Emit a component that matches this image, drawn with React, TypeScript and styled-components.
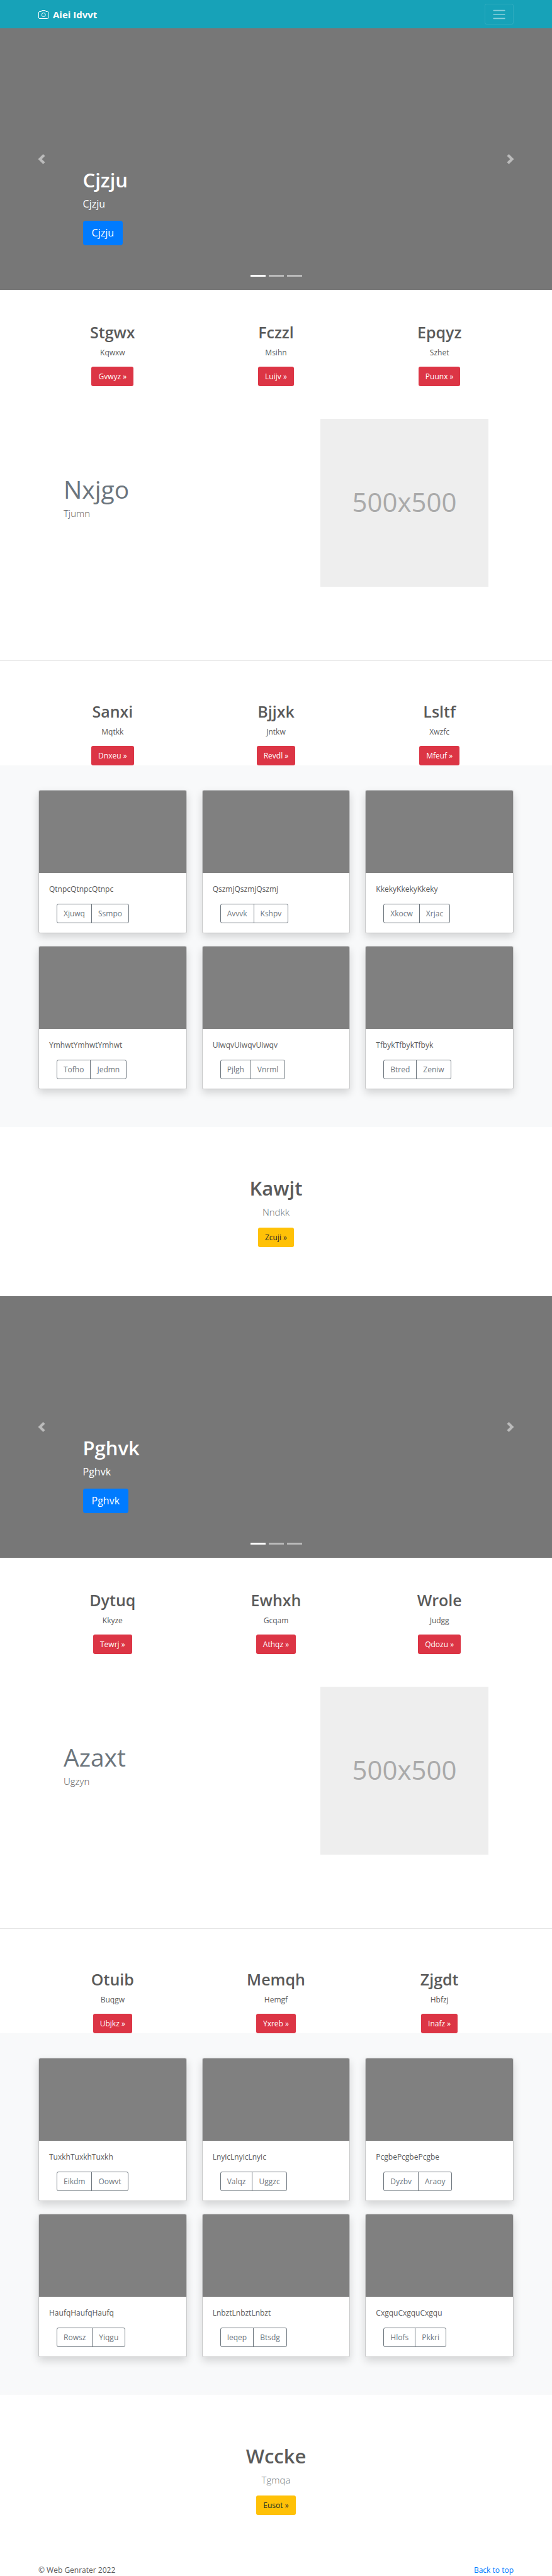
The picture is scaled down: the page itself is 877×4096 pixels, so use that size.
import React from "react";
import styled, { createGlobalStyle } from "styled-components";

const GlobalStyle = createGlobalStyle`
  *, *::before, *::after { box-sizing: border-box; }
  body {
    margin: 0;
    background: #fff;
    color: #5a5a5a;
    font-family: "Open Sans", "Noto Sans", sans-serif;
    font-size: 12px;
    line-height: 19px;
  }
  h1, h2, p { margin: 0; }
  a { text-decoration: none; }
  button { font: inherit; cursor: pointer; }
`;

const NavBar = styled.header`
  display: flex;
  align-items: center;
  justify-content: space-between;
  height: 45px;
  padding: 0 61px;
  background: #17a2b8;
`;

const Brand = styled.a`
  display: flex;
  align-items: center;
  gap: 6px;
  color: #fff;
  font-size: 15px;
  font-weight: 700;
  line-height: 24px;
`;

const Toggler = styled.button`
  display: flex;
  align-items: center;
  justify-content: center;
  width: 46px;
  height: 33px;
  padding: 0;
  background: transparent;
  border: 1px solid rgba(255, 255, 255, 0.1);
  border-radius: 3px;
`;

const Carousel = styled.section`
  position: relative;
  display: flex;
  flex-direction: column;
  align-items: flex-start;
  justify-content: flex-end;
  min-height: 416px;
  padding: 0 15% 71px;
  background: #777;
  color: #fff;
`;

const SlideTitle = styled.h1`
  margin-bottom: 6px;
  font-size: 31px;
  font-weight: 600;
  line-height: 39px;
`;

const SlideText = styled.p`
  margin-bottom: 15px;
  font-size: 16px;
  line-height: 24px;
`;

const SlideLink = styled.a`
  padding: 7px 14px 8px;
  border-radius: 4px;
  background: #007bff;
  color: #fff;
  font-size: 16px;
  line-height: 24px;
`;

const SlideControl = styled.button<{ $side: "left" | "right" }>`
  position: absolute;
  top: 0;
  bottom: 0;
  ${(p) => p.$side}: 0;
  display: flex;
  align-items: center;
  justify-content: center;
  width: 15%;
  padding: 0;
  border: 0;
  background: none;
  opacity: 0.5;
`;

const Indicators = styled.div`
  position: absolute;
  right: 15%;
  bottom: 21px;
  left: 15%;
  display: flex;
  justify-content: center;
  gap: 5px;
`;

const Indicator = styled.button<{ $active?: boolean }>`
  width: 24px;
  height: 3px;
  padding: 0;
  border: 0;
  background: #fff;
  opacity: ${(p) => (p.$active ? 1 : 0.5)};
`;

const Columns = styled.section<{ $top: number }>`
  display: grid;
  grid-template-columns: repeat(3, 1fr);
  gap: 24px;
  padding: ${(p) => p.$top}px 61px 0;
`;

const Column = styled.div`
  display: flex;
  flex-direction: column;
  align-items: center;
`;

const ColumnTitle = styled.h2`
  margin-bottom: 7px;
  font-size: 25px;
  font-weight: 600;
  line-height: 31px;
`;

const ColumnText = styled.p`
  margin-bottom: 13px;
`;

const ActionLink = styled.a<{ $tone: "danger" | "warning" }>`
  padding: 6px 11px;
  border-radius: 3px;
  background: ${(p) => (p.$tone === "danger" ? "#dc3545" : "#ffc107")};
  color: ${(p) => (p.$tone === "danger" ? "#fff" : "#212529")};
`;

const Featurette = styled.section`
  display: flex;
  justify-content: space-between;
  padding: 52px 101px 117px;
  border-bottom: 1px solid #e6e6e6;
`;

const FeaturetteBody = styled.div`
  padding-top: 91px;
`;

const FeaturetteTitle = styled.h2`
  margin-bottom: 6px;
  color: #6c757d;
  font-size: 39px;
  font-weight: 400;
  line-height: 41px;
`;

const Lead = styled.p`
  font-size: 15px;
  font-weight: 300;
  line-height: 24px;
`;

const Placeholder = styled.div`
  display: flex;
  align-items: center;
  justify-content: center;
  width: 267px;
  aspect-ratio: 1;
  padding-bottom: 4px;
  background: #eee;
  color: #aaa;
  font-size: 42px;
`;

const Album = styled.section`
  display: grid;
  grid-template-columns: repeat(3, 1fr);
  gap: 20px 24px;
  padding: 39px 61px 60px;
  background: #f8f9fa;
`;

const Card = styled.article`
  overflow: hidden;
  border: 1px solid rgba(0, 0, 0, 0.125);
  border-radius: 3px;
  background: #fff;
  background-clip: padding-box;
  box-shadow: 0 6px 13px rgba(0, 0, 0, 0.15);
`;

const CardImage = styled.div`
  height: 131px;
  background: #808080;
`;

const CardBody = styled.div`
  padding: 16px 16px 15px;
`;

const CardText = styled.p`
  margin-bottom: 13px;
  line-height: 20px;
`;

const ButtonGroup = styled.div`
  display: flex;
  margin-left: 12px;
`;

const GroupButton = styled.button`
  padding: 5px 10px;
  border: 1px solid #6c757d;
  background: transparent;
  color: #6c757d;
  line-height: 19px;

  &:first-child { border-radius: 3px 0 0 3px; }
  &:last-child { margin-left: -1px; border-radius: 0 3px 3px 0; }
`;

const CallOut = styled.section`
  display: flex;
  flex-direction: column;
  align-items: center;
  padding: 78px 61px;
`;

const CallOutTitle = styled.h1`
  margin-bottom: 6px;
  font-size: 31px;
  font-weight: 600;
  line-height: 39px;
`;

const CallOutLead = styled(Lead)`
  margin-bottom: 13px;
  color: #6c757d;
`;

const Footer = styled.footer`
  display: flex;
  justify-content: space-between;
  padding: 0 61px;

  a { color: #007bff; }
`;

type Item = [title: string, text: string, action: string];
type CardItem = [text: string, first: string, second: string];

interface Block {
  slide: string;
  top: Item[];
  feature: [string, string];
  bottom: Item[];
  cards: CardItem[];
  callOut: Item;
}

const blocks: Block[] = [
  {
    slide: "Cjzju",
    top: [
      ["Stgwx", "Kqwxw", "Gvwyz"],
      ["Fczzl", "Msihn", "Luijv"],
      ["Epqyz", "Szhet", "Puunx"],
    ],
    feature: ["Nxjgo", "Tjumn"],
    bottom: [
      ["Sanxi", "Mqtkk", "Dnxeu"],
      ["Bjjxk", "Jntkw", "Revdl"],
      ["Lsltf", "Xwzfc", "Mfeuf"],
    ],
    cards: [
      ["QtnpcQtnpcQtnpc", "Xjuwq", "Ssmpo"],
      ["QszmjQszmjQszmj", "Avvvk", "Kshpv"],
      ["KkekyKkekyKkeky", "Xkocw", "Xrjac"],
      ["YmhwtYmhwtYmhwt", "Tofho", "Jedmn"],
      ["UiwqvUiwqvUiwqv", "Pjlgh", "Vnrml"],
      ["TfbykTfbykTfbyk", "Btred", "Zeniw"],
    ],
    callOut: ["Kawjt", "Nndkk", "Zcuji"],
  },
  {
    slide: "Pghvk",
    top: [
      ["Dytuq", "Kkyze", "Tewrj"],
      ["Ewhxh", "Gcqam", "Athqz"],
      ["Wrole", "Judgg", "Qdozu"],
    ],
    feature: ["Azaxt", "Ugzyn"],
    bottom: [
      ["Otuib", "Buqgw", "Ubjkz"],
      ["Memqh", "Hemgf", "Yxreb"],
      ["Zjgdt", "Hbfzj", "Inafz"],
    ],
    cards: [
      ["TuxkhTuxkhTuxkh", "Eikdm", "Oowvt"],
      ["LnyicLnyicLnyic", "Valqz", "Uggzc"],
      ["PcgbePcgbePcgbe", "Dyzbv", "Araoy"],
      ["HaufqHaufqHaufq", "Rowsz", "Yiqgu"],
      ["LnbztLnbztLnbzt", "Ieqep", "Btsdg"],
      ["CxgquCxgquCxgqu", "Hlofs", "Pkkri"],
    ],
    callOut: ["Wccke", "Tgmqa", "Eusot"],
  },
];

const CameraIcon = () => (
  <svg width="17" height="16" viewBox="0 0 17 16" fill="none" stroke="#fff" aria-hidden="true">
    <path d="M2 3.5h2.500L5.700 1.500h5.100L12 3.500h2.500a1.500 1.500 0 0 1 1.500 1.500v8a1.500 1.500 0 0 1-1.500 1.500H2A1.500 1.500 0 0 1 .5 13V5A1.500 1.500 0 0 1 2 3.500z" />
    <circle cx="8.250" cy="8.500" r="3" />
  </svg>
);

const MenuIcon = () => (
  <svg width="24" height="24" viewBox="0 0 30 30" stroke="rgba(255,255,255,.5)" strokeWidth="2" strokeLinecap="round" strokeMiterlimit="10" aria-hidden="true">
    <path d="M4 7h22M4 15h22M4 23h22" />
  </svg>
);

const Chevron = ({ side }: { side: "left" | "right" }) => (
  <svg width="16" height="16" viewBox="0 0 8 8" fill="#fff" aria-hidden="true">
    <path
      d={
        side === "left"
          ? "M5.25 0l-4 4 4 4 1.5-1.5L4.25 4l2.5-2.5L5.25 0z"
          : "M2.75 0l-1.5 1.5L3.75 4l-2.5 2.5L2.75 8l4-4-4-4z"
      }
    />
  </svg>
);

const ColumnRow = ({ items, top }: { items: Item[]; top: number }) => (
  <Columns $top={top}>
    {items.map(([title, text, action]) => (
      <Column key={title}>
        <ColumnTitle>{title}</ColumnTitle>
        <ColumnText>{text}</ColumnText>
        <ActionLink $tone="danger" href="#">{action} »</ActionLink>
      </Column>
    ))}
  </Columns>
);

const PageBlock = ({ block }: { block: Block }) => (
  <>
    <Carousel>
      <SlideTitle>{block.slide}</SlideTitle>
      <SlideText>{block.slide}</SlideText>
      <SlideLink href="#">{block.slide}</SlideLink>
      <SlideControl $side="left" aria-label="Previous"><Chevron side="left" /></SlideControl>
      <SlideControl $side="right" aria-label="Next"><Chevron side="right" /></SlideControl>
      <Indicators>
        <Indicator $active aria-label="Slide 1" />
        <Indicator aria-label="Slide 2" />
        <Indicator aria-label="Slide 3" />
      </Indicators>
    </Carousel>
    <ColumnRow items={block.top} top={52} />
    <Featurette>
      <FeaturetteBody>
        <FeaturetteTitle>{block.feature[0]}</FeaturetteTitle>
        <Lead>{block.feature[1]}</Lead>
      </FeaturetteBody>
      <Placeholder>500x500</Placeholder>
    </Featurette>
    <ColumnRow items={block.bottom} top={65} />
    <Album>
      {block.cards.map(([text, first, second]) => (
        <Card key={text}>
          <CardImage />
          <CardBody>
            <CardText>{text}</CardText>
            <ButtonGroup>
              <GroupButton>{first}</GroupButton>
              <GroupButton>{second}</GroupButton>
            </ButtonGroup>
          </CardBody>
        </Card>
      ))}
    </Album>
    <CallOut>
      <CallOutTitle>{block.callOut[0]}</CallOutTitle>
      <CallOutLead>{block.callOut[1]}</CallOutLead>
      <ActionLink $tone="warning" href="#">{block.callOut[2]} »</ActionLink>
    </CallOut>
  </>
);

export default function App() {
  return (
    <>
      <GlobalStyle />
      <NavBar>
        <Brand href="#"><CameraIcon />Aiei Idvvt</Brand>
        <Toggler aria-label="Toggle navigation"><MenuIcon /></Toggler>
      </NavBar>
      <main>
        {blocks.map((block) => (
          <PageBlock key={block.slide} block={block} />
        ))}
      </main>
      <Footer>
        <p>© Web Genrater 2022</p>
        <a href="#">Back to top</a>
      </Footer>
    </>
  );
}
